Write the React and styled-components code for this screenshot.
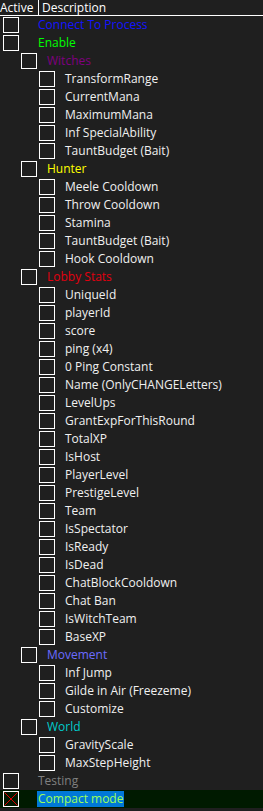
import React from "react";
import styled, { createGlobalStyle } from "styled-components";

const Global = createGlobalStyle`
  html, body { margin: 0; padding: 0; background: #1f1f1f; }
  body { font-family: "Open Sans", "Noto Sans", sans-serif; font-size: 12px; }
`;

const Panel = styled.div`
  width: 263px;
  height: 811px;
  background: #1f1f1f;
  color: #f0f0f0;
  overflow: hidden;
`;

const Header = styled.div`
  display: grid;
  grid-template-columns: 38px 1px 1fr;
  height: 15px;
  border-bottom: 1px solid #ffffff;
  line-height: 15px;
  font-size: 12px;
`;

const HeaderCell = styled.div`
  padding-left: ${(p) => (p.$first ? 0 : 3)}px;
  color: #ffffff;
  white-space: nowrap;
`;

const Divider = styled.div`
  background: #ffffff;
`;

const Row = styled.div`
  display: flex;
  align-items: flex-start;
  height: 18px;
  padding-left: ${(p) => 3 + p.$level * 18}px;
  background: ${(p) => (p.$selected ? "#001a00" : "transparent")};
`;

const Box = styled.div`
  box-sizing: border-box;
  width: 16px;
  height: 16px;
  margin-top: 1px;
  border: 1px solid #ffffff;
  flex: none;
  position: relative;
`;

const Label = styled.span`
  margin-left: ${(p) => (p.$level === 0 ? 19 : 10)}px;
  margin-top: 1px;
  height: 16px;
  line-height: 16px;
  padding: 0 ${(p) => (p.$selected ? 1 : 0)}px;
  margin-left: ${(p) => (p.$level === 0 ? (p.$selected ? 18 : 19) : 10)}px;
  color: ${(p) => p.$color};
  background: ${(p) => (p.$selected ? "#0078d7" : "transparent")};
  white-space: nowrap;
`;

const rows = [
  { t: "Connect To Process", l: 0, c: "#1414ff" },
  { t: "Enable", l: 0, c: "#00ff00" },
  { t: "Witches", l: 1, c: "#800080" },
  { t: "TransformRange", l: 2 },
  { t: "CurrentMana", l: 2 },
  { t: "MaximumMana", l: 2 },
  { t: "Inf SpecialAbility", l: 2 },
  { t: "TauntBudget (Bait)", l: 2 },
  { t: "Hunter", l: 1, c: "#ffff00" },
  { t: "Meele Cooldown", l: 2 },
  { t: "Throw Cooldown", l: 2 },
  { t: "Stamina", l: 2 },
  { t: "TauntBudget (Bait)", l: 2 },
  { t: "Hook Cooldown", l: 2 },
  { t: "Lobby Stats", l: 1, c: "#e2000f" },
  { t: "UniqueId", l: 2 },
  { t: "playerId", l: 2 },
  { t: "score", l: 2 },
  { t: "ping (x4)", l: 2 },
  { t: "0 Ping Constant", l: 2 },
  { t: "Name (OnlyCHANGELetters)", l: 2 },
  { t: "LevelUps", l: 2 },
  { t: "GrantExpForThisRound", l: 2 },
  { t: "TotalXP", l: 2 },
  { t: "IsHost", l: 2 },
  { t: "PlayerLevel", l: 2 },
  { t: "PrestigeLevel", l: 2 },
  { t: "Team", l: 2 },
  { t: "IsSpectator", l: 2 },
  { t: "IsReady", l: 2 },
  { t: "IsDead", l: 2 },
  { t: "ChatBlockCooldown", l: 2 },
  { t: "Chat Ban", l: 2 },
  { t: "IsWitchTeam", l: 2 },
  { t: "BaseXP", l: 2 },
  { t: "Movement", l: 1, c: "#6b6bff" },
  { t: "Inf Jump", l: 2 },
  { t: "Gilde in Air (Freezeme)", l: 2 },
  { t: "Customize", l: 2 },
  { t: "World", l: 1, c: "#00cccc" },
  { t: "GravityScale", l: 2 },
  { t: "MaxStepHeight", l: 2 },
  { t: "Testing", l: 0, c: "#808080" },
  { t: "Compact mode", l: 0, c: "#9cff5a", sel: true, x: true },
];

function Cross() {
  return (
    <svg width="14" height="14" viewBox="0 0 14 14" style={{ display: "block" }}>
      <path d="M0.5 0.5 L13.5 13.5 M13.5 0.5 L0.5 13.5" stroke="#e00000" strokeWidth="1" />
    </svg>
  );
}

export default function App() {
  return (
    <Panel>
      <Global />
      <Header>
        <HeaderCell $first>Active</HeaderCell>
        <Divider />
        <HeaderCell>Description</HeaderCell>
      </Header>
      {rows.map((r, i) => (
        <Row key={i} $level={r.l} $selected={r.sel}>
          <Box>{r.x && <Cross />}</Box>
          <Label $level={r.l} $color={r.c || "#f0f0f0"} $selected={r.sel}>
            {r.t}
          </Label>
        </Row>
      ))}
    </Panel>
  );
}
